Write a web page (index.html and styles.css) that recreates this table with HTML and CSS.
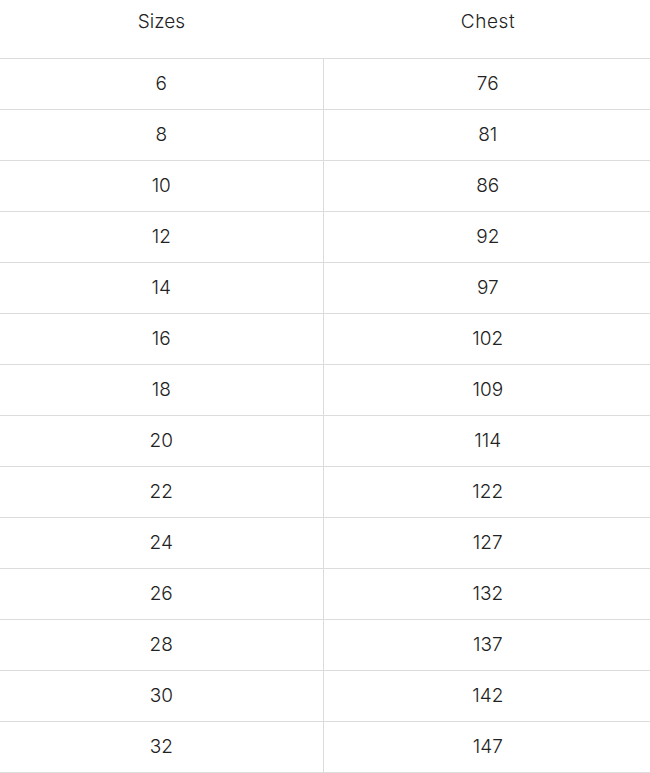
FILE: index.html
```html
<!DOCTYPE html>
<html>
<head>
<meta charset="utf-8">
<link rel="stylesheet" href="styles.css">
</head>
<body>
<table class="size-table">
  <thead>
    <tr><th>Sizes</th><th>Chest</th></tr>
  </thead>
  <tbody>
    <tr><td>6</td><td>76</td></tr>
    <tr><td>8</td><td>81</td></tr>
    <tr><td>10</td><td>86</td></tr>
    <tr><td>12</td><td>92</td></tr>
    <tr><td>14</td><td>97</td></tr>
    <tr><td>16</td><td>102</td></tr>
    <tr><td>18</td><td>109</td></tr>
    <tr><td>20</td><td>114</td></tr>
    <tr><td>22</td><td>122</td></tr>
    <tr><td>24</td><td>127</td></tr>
    <tr><td>26</td><td>132</td></tr>
    <tr><td>28</td><td>137</td></tr>
    <tr><td>30</td><td>142</td></tr>
    <tr><td>32</td><td>147</td></tr>
  </tbody>
</table>
</body>
</html>
```
FILE: styles.css
```css
html, body {
  margin: 0;
  padding: 0;
  background: #fff;
}
.size-table {
  width: 650px;
  border-collapse: collapse;
  table-layout: fixed;
  font-family: "Inter", "Lato", sans-serif;
  font-weight: 300;
  font-size: 19px;
  color: #222;
}
.size-table th,
.size-table td {
  text-align: center;
  padding: 0;
  border-bottom: 1px solid #dcdcdc;
}
.size-table th {
  font-weight: 300;
  height: 58px;
  vertical-align: top;
  padding-top: 10px;
  box-sizing: border-box;
}
.size-table th:first-child,
.size-table td:first-child {
  width: 323px;
}
.size-table th + th {
  letter-spacing: 0.6px;
  padding-left: 3px;
}
.size-table td {
  height: 50px;
}
.size-table td + td {
  border-left: 1px solid #dcdcdc;
  padding-left: 2px;
}
```
